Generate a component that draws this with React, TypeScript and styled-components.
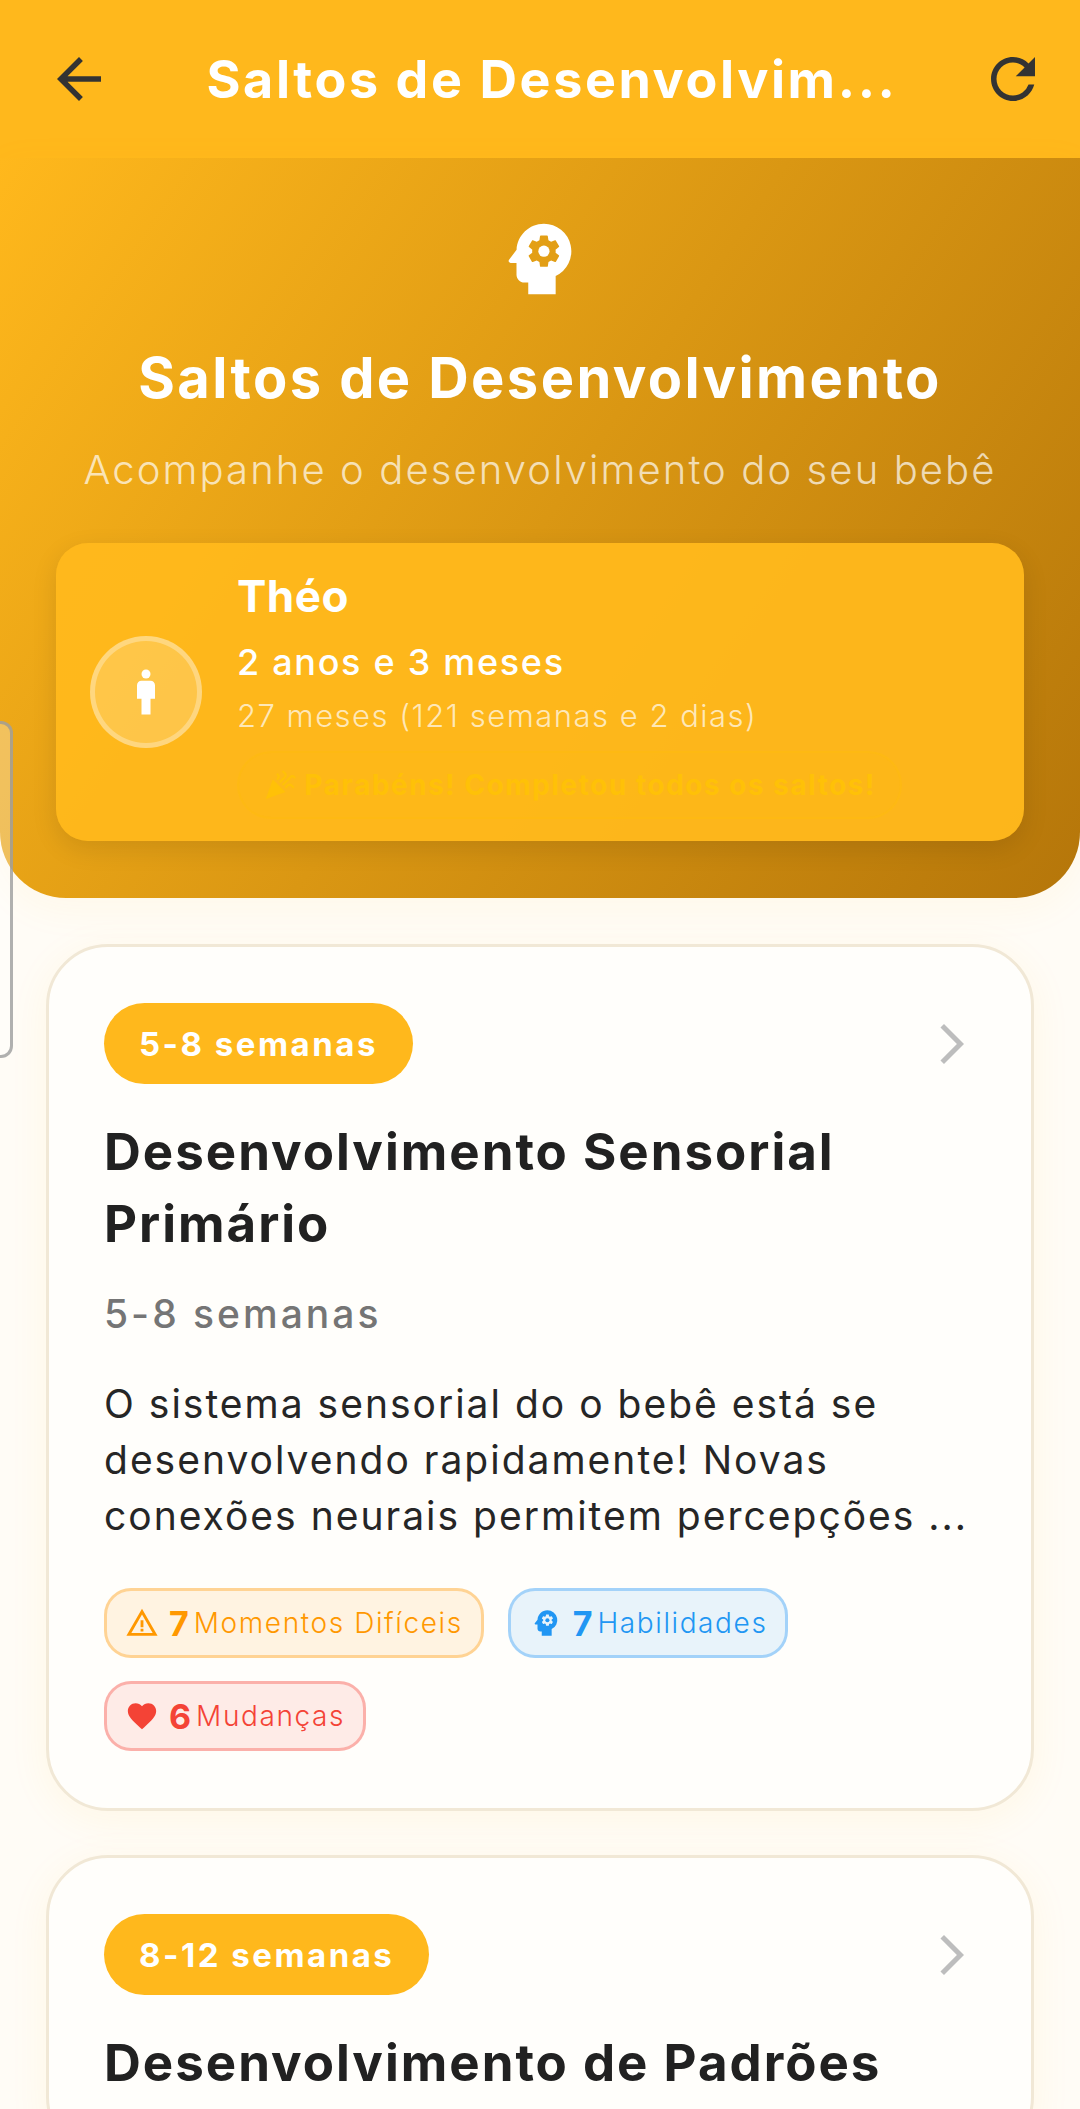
import React from 'react';
import styled, { createGlobalStyle } from 'styled-components';
import {
  MdArrowBack,
  MdRefresh,
  MdPsychology,
  MdMan,
  MdCelebration,
  MdArrowForwardIos,
  MdWarningAmber,
  MdFavorite,
} from 'react-icons/md';

const GlobalStyle = createGlobalStyle`
  html, body { margin: 0; padding: 0; background: #fffcf6; }
  body { font-family: Inter, "Noto Sans", sans-serif; }
  * { box-sizing: border-box; }
`;

const Page = styled.div`
  position: relative;
  width: 1080px;
  height: 2109px;
  overflow: hidden;
  background: #fffcf6;
`;

const AppBar = styled.header`
  height: 158px;
  background: #ffb81c;
  display: flex;
  align-items: center;
  padding: 0 34px 0 46px;
  color: #333;
`;

const BarTitle = styled.h1`
  flex: 1;
  margin: 0;
  padding-left: 12px;
  text-align: center;
  color: #fff;
  font-size: 52px;
  font-weight: 700;
  letter-spacing: 2.6px;
  white-space: nowrap;
`;

const Hero = styled.section`
  height: 740px;
  padding: 54px 56px 0;
  border-radius: 0 0 66px 66px;
  background: linear-gradient(124deg, #ffb81c 0%, #b5760a 100%);
  box-shadow: 0 10px 40px rgba(255, 184, 28, 0.06);
  display: flex;
  flex-direction: column;
  align-items: center;
  color: #fff;
`;

const HeroTitle = styled.h2`
  margin: 37px 0 0;
  font-size: 56px;
  line-height: 70px;
  font-weight: 700;
  letter-spacing: 2.4px;
`;

const HeroSubtitle = styled.p`
  margin: 29px 0 0;
  font-size: 40px;
  line-height: 56px;
  font-weight: 300;
  letter-spacing: 2.1px;
  color: rgba(255, 255, 255, 0.7);
  white-space: nowrap;
`;

const InfoCard = styled.div`
  align-self: stretch;
  height: 298px;
  margin-top: 45px;
  padding: 0 34px;
  border-radius: 32px;
  background: rgba(255, 184, 28, 0.96);
  box-shadow: 0 8px 26px rgba(0, 0, 0, 0.1);
  display: flex;
  align-items: center;
  gap: 35px;
`;

const Avatar = styled.div`
  width: 112px;
  height: 112px;
  flex: none;
  border-radius: 50%;
  border: 5px solid rgba(255, 255, 255, 0.3);
  background: rgba(255, 255, 255, 0.2);
  display: flex;
  align-items: center;
  justify-content: center;
  color: #fff;
`;

const InfoText = styled.div`
  padding-top: 3px;
  display: flex;
  flex-direction: column;
  align-items: flex-start;
`;

const ChildName = styled.div`
  font-size: 44px;
  line-height: 56px;
  font-weight: 700;
  letter-spacing: 0.5px;
`;

const ChildAge = styled.div`
  margin-top: 13px;
  font-size: 36px;
  line-height: 50px;
  font-weight: 500;
  letter-spacing: 1.7px;
`;

const ChildDetail = styled.div`
  margin-top: 7px;
  font-size: 31px;
  line-height: 44px;
  font-weight: 300;
  letter-spacing: 1.5px;
  color: rgba(255, 255, 255, 0.7);
`;

const DonePill = styled.div`
  margin-top: 13px;
  height: 68px;
  width: 665px;
  padding: 0 24px 0 24px;
  border-radius: 34px;
  border: 2px solid rgba(255, 193, 7, 0.25);
  background: rgba(255, 193, 7, 0.14);
  display: flex;
  align-items: center;
  gap: 8px;
  color: #ffc107;
  font-size: 28px;
  font-weight: 700;
  letter-spacing: 1.5px;
  white-space: nowrap;
`;

const SideHandle = styled.div`
  position: absolute;
  left: -20px;
  top: 721px;
  width: 33px;
  height: 337px;
  border: 3px solid rgba(150, 150, 150, 0.75);
  border-radius: 12px;
  background: rgba(255, 255, 255, 0.3);
`;

const List = styled.main`
  padding: 46px 46px 0;
  display: flex;
  flex-direction: column;
  gap: 44px;
`;

const Card = styled.article`
  padding: 56px 55px 57px;
  border-radius: 62px;
  border: 3px solid #f1e8d6;
  background: #fffefb;
  box-shadow: 0 8px 40px rgba(255, 184, 28, 0.07);
`;

const CardTop = styled.div`
  display: flex;
  align-items: center;
  justify-content: space-between;
  color: #bdbdbd;
`;

const WeeksBadge = styled.div`
  height: 81px;
  padding: 0 35px;
  border-radius: 41px;
  background: #ffb81c;
  color: #fff;
  font-size: 33px;
  font-weight: 700;
  letter-spacing: 2.5px;
  display: flex;
  align-items: center;
`;

const CardTitle = styled.h3`
  margin: 32px 0 0;
  font-size: 51px;
  line-height: 72px;
  font-weight: 700;
  letter-spacing: 2px;
  color: #212121;
`;

const CardRange = styled.div`
  margin-top: 28px;
  font-size: 39px;
  line-height: 52px;
  font-weight: 500;
  letter-spacing: 3px;
  color: #757575;
`;

const CardText = styled.p`
  margin: 36px 0 0;
  font-size: 39px;
  line-height: 56px;
  font-weight: 400;
  letter-spacing: 2px;
  color: #262626;
  white-space: nowrap;
`;

const Chips = styled.div`
  margin-top: 44px;
  display: flex;
  flex-wrap: wrap;
  gap: 23px 24px;
`;

const Chip = styled.div<{ $tone: string; $rgb: string }>`
  height: 70px;
  padding: 0 18px;
  border-radius: 27px;
  border: 3px solid rgba(${p => p.$rgb}, 0.35);
  background: rgba(${p => p.$rgb}, 0.1);
  color: ${p => p.$tone};
  display: flex;
  align-items: center;
`;

const ChipCount = styled.span`
  margin-left: 10px;
  font-size: 34px;
  font-weight: 700;
`;

const ChipLabel = styled.span`
  margin-left: 5px;
  font-size: 28px;
  font-weight: 300;
  letter-spacing: 1.6px;
`;

const cards = [
  {
    weeks: '5-8 semanas',
    title: ['Desenvolvimento Sensorial', 'Primário'],
    text: [
      'O sistema sensorial do o bebê está se',
      'desenvolvendo rapidamente! Novas',
      'conexões neurais permitem percepções ...',
    ],
    stats: [7, 7, 6],
  },
  {
    weeks: '8-12 semanas',
    title: ['Desenvolvimento de Padrões'],
    text: [],
    stats: [],
  },
];

export default function App() {
  return (
    <Page>
      <GlobalStyle />
      <AppBar>
        <MdArrowBack size={66} />
        <BarTitle>Saltos de Desenvolvim...</BarTitle>
        <MdRefresh size={66} />
      </AppBar>
      <Hero>
        <MdPsychology size={94} />
        <HeroTitle>Saltos de Desenvolvimento</HeroTitle>
        <HeroSubtitle>Acompanhe o desenvolvimento do seu bebê</HeroSubtitle>
        <InfoCard>
          <Avatar>
            <MdMan size={54} />
          </Avatar>
          <InfoText>
            <ChildName>Théo</ChildName>
            <ChildAge>2 anos e 3 meses</ChildAge>
            <ChildDetail>27 meses (121 semanas e 2 dias)</ChildDetail>
            <DonePill>
              <MdCelebration size={34} />
              Parabéns! Completou todos os saltos!
            </DonePill>
          </InfoText>
        </InfoCard>
      </Hero>
      <SideHandle />
      <List>
        {cards.map(card => (
          <Card key={card.weeks}>
            <CardTop>
              <WeeksBadge>{card.weeks}</WeeksBadge>
              <MdArrowForwardIos size={48} />
            </CardTop>
            <CardTitle>
              {card.title.map(line => (
                <div key={line}>{line}</div>
              ))}
            </CardTitle>
            {card.text.length > 0 && (
              <>
                <CardRange>{card.weeks}</CardRange>
                <CardText>
                  {card.text.map(line => (
                    <div key={line}>{line}</div>
                  ))}
                </CardText>
                <Chips>
                  <Chip $tone="#ff9800" $rgb="255, 152, 0">
                    <MdWarningAmber size={34} />
                    <ChipCount>{card.stats[0]}</ChipCount>
                    <ChipLabel>Momentos Difíceis</ChipLabel>
                  </Chip>
                  <Chip $tone="#2196f3" $rgb="33, 150, 243">
                    <MdPsychology size={34} />
                    <ChipCount>{card.stats[1]}</ChipCount>
                    <ChipLabel>Habilidades</ChipLabel>
                  </Chip>
                  <Chip $tone="#f44336" $rgb="244, 67, 54">
                    <MdFavorite size={34} />
                    <ChipCount>{card.stats[2]}</ChipCount>
                    <ChipLabel>Mudanças</ChipLabel>
                  </Chip>
                </Chips>
              </>
            )}
          </Card>
        ))}
      </List>
    </Page>
  );
}
